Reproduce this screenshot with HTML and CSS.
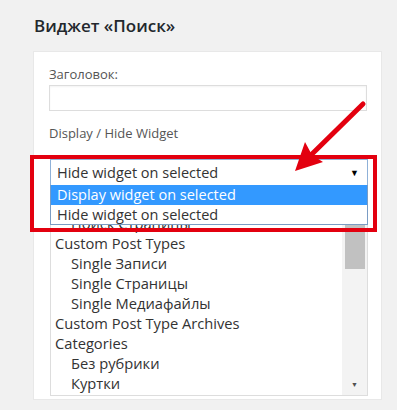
FILE: index.html
```html
<!DOCTYPE html>
<html lang="ru">
<head>
  <meta charset="UTF-8" />
  <title>Виджет «Поиск»</title>
  <link rel="stylesheet" href="styles.css">
</head>
<body>
  <div class="page">
    <h2 class="title">Виджет «Поиск»</h2>

    <div class="panel">
      <label class="label">Заголовок:</label>
      <div class="text-input"></div>

      <label class="label label-gap">Display / Hide Widget</label>

      <div class="select-wrap">
        <div class="select">
          <span>Hide widget on selected</span>
          <span class="caret">▼</span>
        </div>
        <div class="dropdown">
          <div class="option active">Display widget on selected</div>
          <div class="option">Hide widget on selected</div>
        </div>
        <div class="highlight"></div>
      </div>

      <div class="listbox">
        <div class="rows">
          <div class="row sub">Поиск Страницы</div>
          <div class="row">Custom Post Types</div>
          <div class="row sub">Single Записи</div>
          <div class="row sub">Single Страницы</div>
          <div class="row sub">Single Медиафайлы</div>
          <div class="row">Custom Post Type Archives</div>
          <div class="row">Categories</div>
          <div class="row sub">Без рубрики</div>
          <div class="row sub">Куртки</div>
        </div>
        <div class="scrollbar">
          <div class="thumb"></div>
          <div class="down">▼</div>
        </div>
      </div>
    </div>
  </div>

  <svg class="pointer" width="397" height="410" viewBox="0 0 397 410">
    <line x1="363" y1="104" x2="310" y2="156" stroke="#e3000f" stroke-width="5" stroke-linecap="round" />
    <polygon points="295,171 305,142 312,155 323,162" fill="#e3000f" />
  </svg>
</body>
</html>
```

FILE: styles.css
```css
body {
  font-family: "Open Sans", "Noto Sans", sans-serif;
  margin: 0;
  background-color: #f1f1f1;
  color: #444;
}

.page {
  padding: 16px 15px 0 33px;
}

.title {
  margin: 0 0 15px 1px;
  font-size: 17px;
  line-height: 20px;
  font-weight: 600;
  color: #23282d;
}

.panel {
  width: 349px;
  height: 349px;
  box-sizing: border-box;
  padding: 13px 14px 0 15px;
  background-color: #fff;
  border: 1px solid #e8e8e8;
}

.label {
  display: block;
  font-size: 13px;
  line-height: 18px;
  color: #555;
}

.label-gap {
  margin-top: 13px;
}

.text-input {
  height: 26px;
  margin-top: 2px;
  box-sizing: border-box;
  border: 1px solid #ddd;
  box-shadow: inset 0 1px 2px rgba(0, 0, 0, 0.05);
}

.select-wrap {
  position: relative;
  margin-top: 17px;
  margin-left: 1px;
  width: 318px;
}

.select {
  height: 26px;
  box-sizing: border-box;
  padding: 0 6px 0 6px;
  display: flex;
  align-items: center;
  justify-content: space-between;
  border: 1px solid #8fb1d8;
  border-bottom: none;
  font-size: 14.5px;
  color: #333;
}

.caret {
  font-size: 9px;
  color: #000;
  margin-right: 2px;
}

.dropdown {
  position: absolute;
  top: 26px;
  left: 0;
  right: 0;
  z-index: 2;
  background-color: #fff;
  border: 1px solid #7a9cc4;
  border-top: none;
}

.option {
  height: 19.5px;
  line-height: 19px;
  padding-left: 6px;
  font-size: 14.5px;
  color: #333;
}

.option.active {
  background-color: #3399ff;
  color: #fff;
}

.highlight {
  position: absolute;
  z-index: 3;
  left: -20px;
  top: -4px;
  width: 347px;
  height: 77px;
  box-sizing: border-box;
  border: 4px solid #e3000f;
}

.listbox {
  display: flex;
  margin-top: 28px;
  margin-left: 1px;
  width: 318px;
  height: 183px;
  box-sizing: border-box;
  border: 1px solid #ddd;
  border-top: none;
  overflow: hidden;
}

.rows {
  flex: 1;
  padding-left: 4px;
}

.row {
  height: 20px;
  line-height: 20px;
  font-size: 14.7px;
  color: #333;
  white-space: nowrap;
}

.row.sub {
  padding-left: 16px;
}

.scrollbar {
  position: relative;
  width: 25px;
  background-color: #f3f3f3;
}

.thumb {
  margin: 0 2px 0 3px;
  height: 56px;
  background-color: #c1c1c1;
}

.down {
  position: absolute;
  bottom: 6px;
  left: 9px;
  font-size: 7px;
  color: #505050;
}

.pointer {
  position: absolute;
  top: 0;
  left: 0;
  z-index: 5;
}
```
